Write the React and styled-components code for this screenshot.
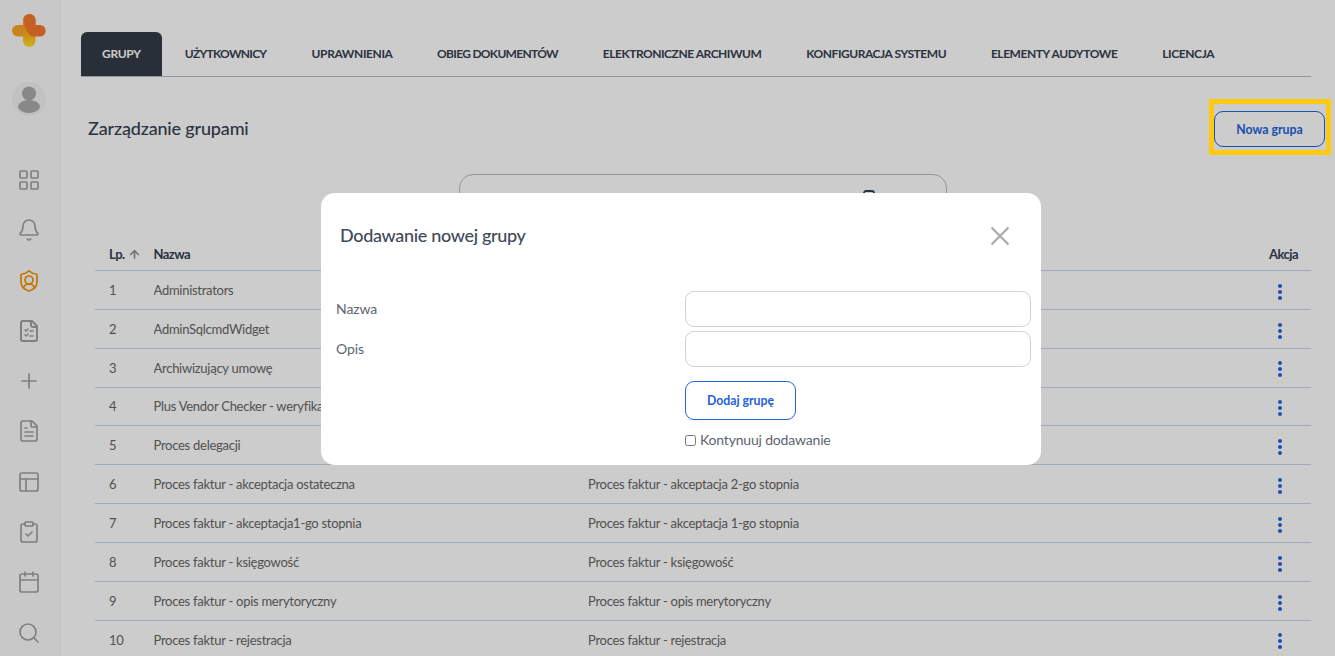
import React from "react";
import styled, { createGlobalStyle } from "styled-components";
import { LayoutGrid, Bell, ShieldUser, Plus, FileText, PanelsTopLeft, ClipboardCheck, Calendar, Search, ArrowUp } from "lucide-react";

const Global = createGlobalStyle`
  html, body { margin: 0; padding: 0; height: 100%; background: #fff; overflow: hidden; }
  body { font-family: "Lato", "Open Sans", sans-serif; color: #36404f; }
  * { box-sizing: border-box; }
`;

const Shell = styled.div`
  display: flex;
  width: 1335px;
  height: 656px;
  overflow: hidden;
`;
const Sidebar = styled.aside`
  width: 59px;
  flex: none;
  height: 656px;
  background: #fbfbfb;
  box-shadow: 1px 0 2px rgba(0,0,0,.08);
  display: flex;
  flex-direction: column;
  align-items: center;
  padding-top: 14px;
`;
const Logo = styled.svg`
  width: 34px;
  height: 33px;
  flex: none;
  margin-left: -1px;
`;
const Avatar = styled.svg`
  width: 34px;
  height: 34px;
  flex: none;
  margin: 35px 0 0 -1px;
`;
const NavList = styled.nav`
  margin: 52px 0 0 -1px;
  display: flex;
  flex-direction: column;
  gap: 26.3px;
`;
const NavIcon = styled.span`
  display: block;
  width: 24px;
  height: 24px;
  color: ${p => (p.$active ? "#f59300" : "#a0a0a0")};
`;
const Main = styled.main`
  flex: 1;
  min-width: 0;
  padding: 32px 24px 0 22px;
`;
const Tabs = styled.div`
  display: flex;
  height: 45px;
  border-bottom: 1px solid #b4bcc6;
`;
const Tab = styled.div`
  height: 44px;
  display: flex;
  align-items: center;
  padding: 0 ${p => p.$pad}px 2px;
  font-size: 12px;
  font-weight: 700;
  letter-spacing: ${p => p.$ls}px;
  white-space: nowrap;
  color: ${p => (p.$active ? "#fff" : "#36404f")};
  background: ${p => (p.$active ? "#323b46" : "transparent")};
  border-radius: ${p => (p.$active ? "6px 6px 0 0" : "0")};
`;
const HeaderRow = styled.div`
  display: flex;
  align-items: center;
  justify-content: space-between;
  margin: 22px -20px 0 7px;
`;
const Title = styled.h1`
  margin: 0;
  padding-top: 2px;
  font-size: 18px;
  font-weight: 500;
  letter-spacing: -0.17px;
  color: #36404f;
`;
const Highlight = styled.div`
  position: relative;
  padding: 12px 6px 8px 5px;
  &::after {
    content: "";
    position: absolute;
    inset: 0;
    border: 5px solid #fec90f;
    z-index: 20;
    pointer-events: none;
  }
`;
const OutlineButton = styled.button`
  width: 111px;
  height: ${p => p.$h || 36}px;
  border: 1px solid #2263dc;
  border-radius: 9px;
  background: transparent;
  color: #2263dc;
  font: 700 12.3px "Lato", sans-serif;
  padding: 0;
`;
const SearchRow = styled.div`
  display: flex;
  justify-content: center;
  padding-left: 14px;
  margin-top: 19px;
`;
const SearchBox = styled.div`
  width: 488px;
  height: 46px;
  border: 1px solid #b4bcc6;
  border-radius: 14px;
  display: flex;
  justify-content: flex-end;
  padding: 15px 71px 0 0;
`;
const PeekIcon = styled.svg`
  width: 12px;
  height: 14px;
`;
const Table = styled.table`
  width: 1216px;
  margin: 16px 0 0 14px;
  border-collapse: separate;
  border-spacing: 0;
  table-layout: fixed;
  font-size: 13px;
  letter-spacing: -0.27px;
`;
const Th = styled.th`
  height: 35px;
  padding: 2px 0 0 ${p => p.$pl || 0}px;
  text-align: left;
  font-weight: 700;
  letter-spacing: -0.55px;
  color: #36404f;
  border-bottom: 1px solid #c8d6e5;
`;
const SortArrow = styled(ArrowUp)`
  width: 13px;
  height: 13px;
  margin-left: 3px;
  vertical-align: -2px;
  color: #8f8f8f;
`;
const Td = styled.td`
  height: 38.85px;
  padding: 0 0 0 ${p => p.$pl || 0}px;
  color: #666;
  border-bottom: 1px solid #c8d6e5;
  white-space: nowrap;
  overflow: hidden;
`;
const ActionTd = styled(Td)`
  padding: 3px 0 0;
  text-align: center;
`;
const Kebab = styled.svg`
  display: inline-block;
  width: 6px;
  height: 18px;
  vertical-align: middle;
`;
const Overlay = styled.div`
  position: fixed;
  inset: 0;
  z-index: 10;
  background: rgba(0,0,0,.2);
  padding: 193px 0 0 321px;
`;
const Modal = styled.div`
  width: 720px;
  height: 272px;
  background: #fff;
  border-radius: 14px;
  padding: 0 10px 0 15px;
`;
const ModalHead = styled.div`
  height: 86px;
  display: flex;
  align-items: center;
  justify-content: space-between;
  padding: 0 21px 0 4px;
`;
const ModalTitle = styled.h2`
  margin: 0 0 2px;
  font-size: 18px;
  font-weight: 500;
  letter-spacing: -0.33px;
  color: #3f4a58;
`;
const Close = styled.svg`
  width: 20px;
  height: 20px;
`;
const Form = styled.div`
  margin-top: 12px;
  display: grid;
  grid-template-columns: 349px 346px;
  row-gap: 4px;
  align-items: center;
  font-size: 14px;
  color: #5b6470;
`;
const Label = styled.span`
  padding-bottom: 2px;
  letter-spacing: -0.1px;
`;
const Field = styled.div`
  height: 36px;
  border: 1px solid #d2d2d2;
  border-radius: 9px;
`;
const Actions = styled.div`
  grid-column: 2;
  padding-top: 10px;
`;
const Check = styled.label`
  display: flex;
  align-items: center;
  gap: 4px;
  margin-top: 13px;
  line-height: 14px;
  letter-spacing: -0.18px;
`;
const Box = styled.span`
  width: 11px;
  height: 11px;
  border: 1px solid #767676;
  border-radius: 2.5px;
  flex: none;
`;

const rows = [
  ["Administrators", ""],
  ["AdminSqlcmdWidget", ""],
  ["Archiwizujący umowę", ""],
  ["Plus Vendor Checker - weryfikacja", ""],
  ["Proces delegacji", ""],
  ["Proces faktur - akceptacja ostateczna", "Proces faktur - akceptacja 2-go stopnia"],
  ["Proces faktur - akceptacja1-go stopnia", "Proces faktur - akceptacja 1-go stopnia"],
  ["Proces faktur - księgowość", "Proces faktur - księgowość"],
  ["Proces faktur - opis merytoryczny", "Proces faktur - opis merytoryczny"],
  ["Proces faktur - rejestracja", "Proces faktur - rejestracja"],
];

const tabs = [
  ["GRUPY", -0.3, 21],
  ["UŻYTKOWNICY", -0.72, 23],
  ["UPRAWNIENIA", -0.4, 22.2],
  ["OBIEG DOKUMENTÓW", -0.69, 22.4],
  ["ELEKTRONICZNE ARCHIWUM", -0.47, 22.4],
  ["KONFIGURACJA SYSTEMU", -0.46, 22.4],
  ["ELEMENTY AUDYTOWE", -0.43, 22.4],
  ["LICENCJA", -0.4, 22.4],
];

const ChecklistFile = () => (
  <svg width="24" height="24" viewBox="0 0 24 24" fill="none" stroke="currentColor" strokeWidth="2" strokeLinecap="round" strokeLinejoin="round">
    <path d="M15 2H6a2 2 0 0 0-2 2v16a2 2 0 0 0 2 2h12a2 2 0 0 0 2-2V7z" />
    <path d="M14 2v4a2 2 0 0 0 2 2h4" />
    <path d="M8 11l1 1 2-2M8 16l1 1 2-2M13 12h3M13 17h3" strokeWidth="1.6" />
  </svg>
);

const nav = [
  [LayoutGrid], [Bell], [ShieldUser, true], [ChecklistFile], [Plus], [FileText], [PanelsTopLeft], [ClipboardCheck], [Calendar], [Search],
];

export default function App() {
  return (
    <>
      <Global />
      <Shell>
        <Sidebar>
          <Logo viewBox="0 0 34 33">
            <defs>
              <linearGradient id="lg1" x1="0" y1="0" x2="0" y2="1">
                <stop offset="0" stopColor="#fb8a2a" />
                <stop offset=".6" stopColor="#fdb024" />
                <stop offset="1" stopColor="#ffe02a" />
              </linearGradient>
            </defs>
            <rect x="0" y="11" width="22" height="11.5" rx="5.7" fill="#fba424" />
            <rect x="11" y="0" width="12.5" height="33" rx="6.2" fill="url(#lg1)" />
            <path d="M12.5 3 C15 -1 23 -1 23.5 6 V11 H28 C35.5 11 35.5 22.5 28 22.5 H21 C15 21 11 12 12.5 3Z" fill="#f5792c" />
          </Logo>
          <Avatar viewBox="0 0 34 34">
            <circle cx="17" cy="17" r="17" fill="#f2f2f2" />
            <circle cx="17" cy="11.5" r="7" fill="#aaa" />
            <ellipse cx="17" cy="24.5" rx="11" ry="6.5" fill="#aaa" />
          </Avatar>
          <NavList>
            {nav.map(([Icon, active], i) => (
              <NavIcon key={i} $active={active}>
                <Icon size={24} strokeWidth={1.7} />
              </NavIcon>
            ))}
          </NavList>
        </Sidebar>
        <Main>
          <Tabs>
            {tabs.map(([t, ls, pad], i) => (
              <Tab key={t} $active={i === 0} $ls={ls} $pad={pad}>{t}</Tab>
            ))}
          </Tabs>
          <HeaderRow>
            <Title>Zarządzanie grupami</Title>
            <Highlight>
              <OutlineButton>Nowa grupa</OutlineButton>
            </Highlight>
          </HeaderRow>
          <SearchRow>
            <SearchBox>
              <PeekIcon viewBox="0 0 12 14">
                <path d="M1 13V3a2 2 0 0 1 2-2h6a2 2 0 0 1 2 2v10" fill="none" stroke="#36404f" strokeWidth="1.8" />
              </PeekIcon>
            </SearchBox>
          </SearchRow>
          <Table>
            <colgroup>
              <col style={{ width: 58.5 }} />
              <col style={{ width: 434.5 }} />
              <col />
              <col style={{ width: 62 }} />
            </colgroup>
            <thead>
              <tr>
                <Th $pl={14}>Lp.<SortArrow strokeWidth={3} /></Th>
                <Th>Nazwa</Th>
                <Th />
                <Th $pl={20}>Akcja</Th>
              </tr>
            </thead>
            <tbody>
              {rows.map((r, i) => (
                <tr key={i}>
                  <Td $pl={14}>{i + 1}</Td>
                  <Td>{r[0]}</Td>
                  <Td>{r[1]}</Td>
                  <ActionTd>
                    <Kebab viewBox="0 0 6 18">
                      <circle cx="3" cy="3" r="2" fill="#2263dc" />
                      <circle cx="3" cy="9" r="2" fill="#2263dc" />
                      <circle cx="3" cy="15" r="2" fill="#2263dc" />
                    </Kebab>
                  </ActionTd>
                </tr>
              ))}
            </tbody>
          </Table>
        </Main>
      </Shell>
      <Overlay>
        <Modal>
          <ModalHead>
            <ModalTitle>Dodawanie nowej grupy</ModalTitle>
            <Close viewBox="0 0 20 20">
              <path d="M1.5 1.5L18.5 18.5M18.5 1.5L1.5 18.5" stroke="#aaa" strokeWidth="2.2" />
            </Close>
          </ModalHead>
          <Form>
            <Label>Nazwa</Label>
            <Field />
            <Label>Opis</Label>
            <Field />
            <Actions>
              <OutlineButton $h={39}>Dodaj grupę</OutlineButton>
              <Check><Box />Kontynuuj dodawanie</Check>
            </Actions>
          </Form>
        </Modal>
      </Overlay>
    </>
  );
}
